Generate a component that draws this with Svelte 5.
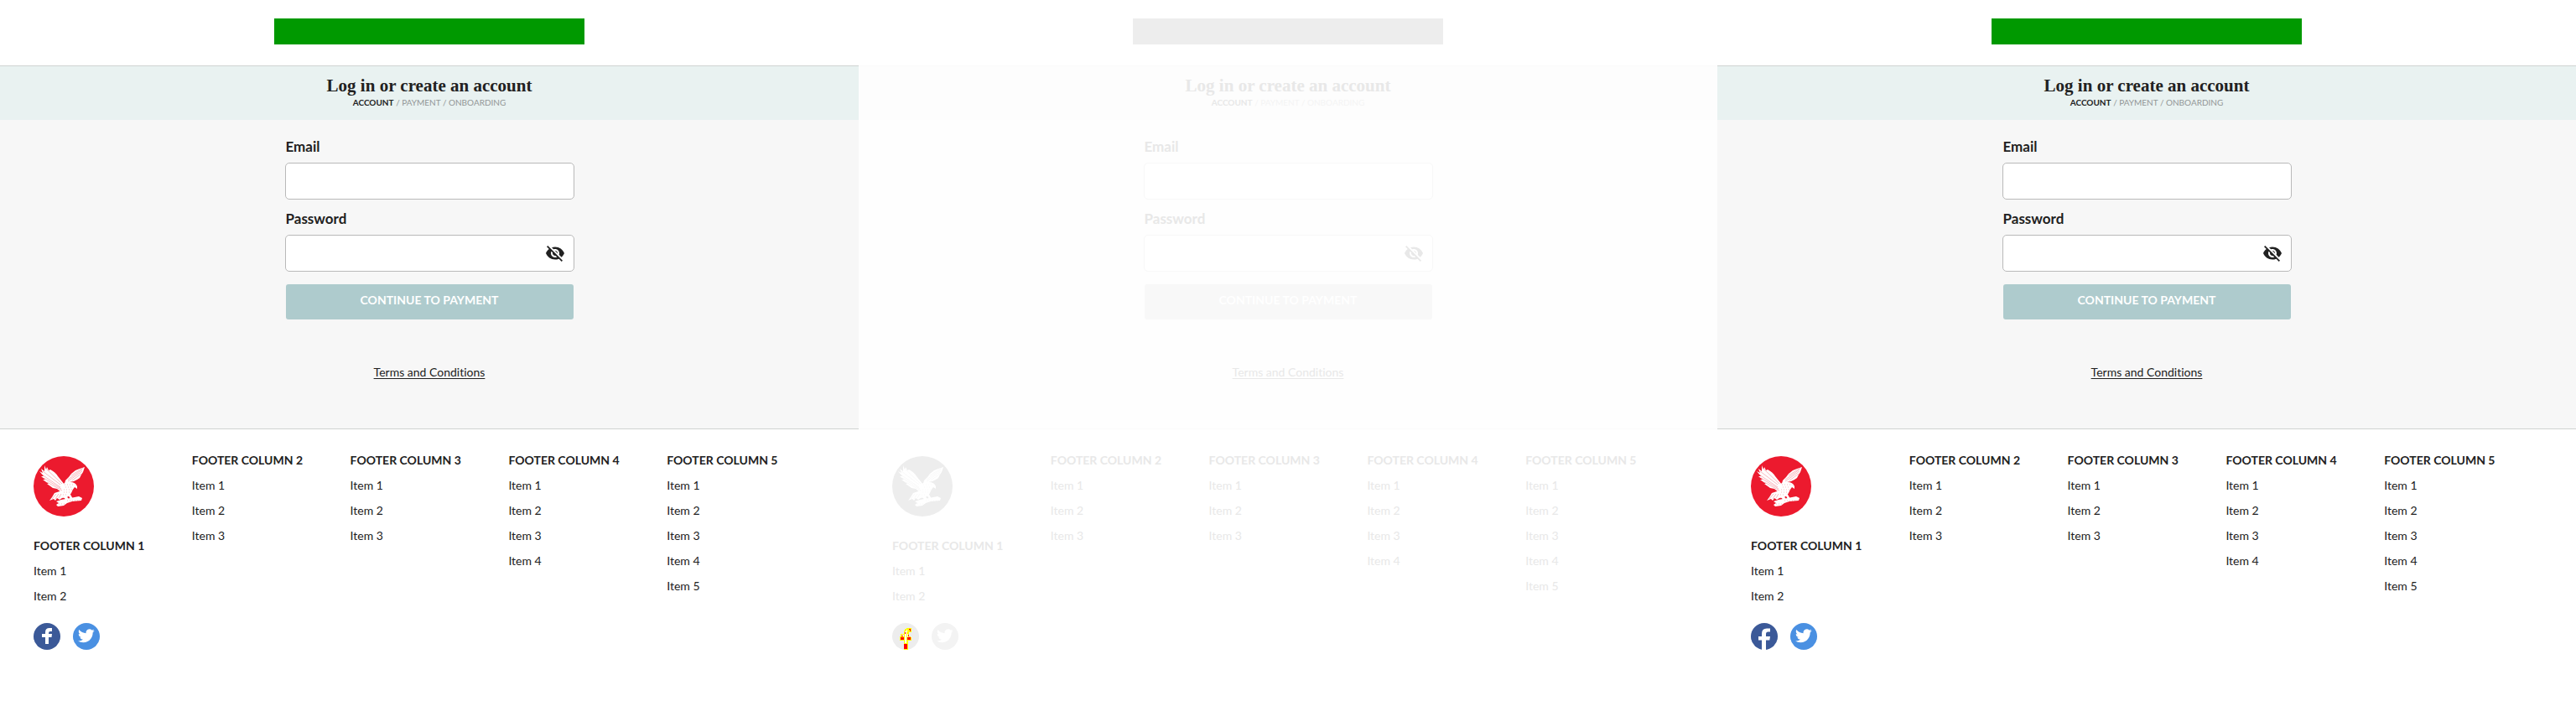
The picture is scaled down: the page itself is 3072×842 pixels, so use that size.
<script>
  const columns = [
    { title: 'Footer column 1', items: 2, brand: true },
    { title: 'Footer column 2', items: 3 },
    { title: 'Footer column 3', items: 3 },
    { title: 'Footer column 4', items: 4 },
    { title: 'Footer column 5', items: 5 }
  ];
  const panels = [
    { id: 'before', tone: '', facebook: 'inset' },
    { id: 'diff', tone: 'faded', facebook: 'marked' },
    { id: 'after', tone: '', facebook: 'full' }
  ];
  const bird = [
    // left wing
    'M13 11 L15 16 L16 13 L18 17 L20 16 Q26 19 29 24 Q33 29 37 34 L36 43 L33 43 L28 39 L23 38 L16 33 L18 33 L11 28 L14 28 L9 24 L12 24 L7 18 L11 20 L9 15 L13 18Z',
    // right wing
    'M61 13 L59 19 L57 22 L55 26 L52 28 L48 30 L43 31 L37 33 L38 29 L42 25 L45 21 L50 17 L55 15Z',
    // body and head
    'M35 34 Q38 30 44 31 Q50 31 52 36 L52 39 L49 37 Q47 39 45 44 Q42 49 37 50 L32 48 L35 43Z',
    // tail
    'M34 41 L25 44 L22 49 L19 53 L24 51 L26 53 L28 50 L31 52 L34 50 L38 49Z',
    // legs
    'M36 48 L39 54 L43 53 L39 47Z M41 46 L44 51 L47 51 L43 44Z',
    // perch
    'M27 54 L33 52 L44 50 L54 48 L58 50 L57 53 L46 54 L40 56 L36 59 L29 60 L27 58 L30 56Z'
  ];
</script>

<div class="board">
  {#each panels as p (p.id)}
    <section class="panel {p.tone}">
      <header class="top"><div class="brand-bar"></div></header>
      <div class="banner">
        <h1>Log in or create an account</h1>
        <p class="steps"><strong>ACCOUNT</strong> / PAYMENT / ONBOARDING</p>
      </div>
      <main>
        <form onsubmit={(e) => e.preventDefault()}>
          <label for="{p.id}-email">Email</label>
          <input id="{p.id}-email" type="email" />
          <label for="{p.id}-password">Password</label>
          <div class="field">
            <input id="{p.id}-password" type="password" />
            <button class="reveal" type="button" aria-label="Show password">
              <svg viewBox="0 0 24 24" width="24" height="24"><path d="M12 7c2.76 0 5 2.24 5 5 0 .65-.13 1.26-.36 1.83l2.92 2.92c1.51-1.26 2.7-2.89 3.43-4.75-1.73-4.39-6-7.5-11-7.5-1.4 0-2.74.25-3.98.7l2.16 2.16C10.74 7.13 11.35 7 12 7zM2 4.27l2.28 2.28.46.46C3.08 8.3 1.78 10.02 1 12c1.73 4.39 6 7.5 11 7.5 1.55 0 3.03-.3 4.38-.84l.42.42L19.73 22 21 20.73 3.27 3 2 4.27zM7.53 9.8l1.55 1.55c-.05.21-.08.43-.08.65 0 1.66 1.34 3 3 3 .22 0 .44-.03.65-.08l1.55 1.55c-.67.33-1.41.53-2.2.53-2.76 0-5-2.24-5-5 0-.79.2-1.53.53-2.2zm4.31-.78l3.15 3.15.02-.16c0-1.66-1.34-3-3-3l-.17.01z" /></svg>
            </button>
          </div>
          <button class="submit" type="submit">CONTINUE TO PAYMENT</button>
        </form>
        <a class="terms" href="#terms">Terms and Conditions</a>
      </main>
      <footer>
        {#each columns as c (c.title)}
          <div class="column">
            {#if c.brand}
              <svg class="eagle" viewBox="0 0 72 72" width="72" height="72">
                <circle class="disc" cx="36" cy="36" r="36" />
                <g class="bird">
                  {#each bird as d}<path {d} />{/each}
                </g>
                <g class="feather">
                  <path d="M11 18 L32 34 M10 22 L32 37 M12 26 L33 39 M16 31 L34 41 M16 16 L34 33 M22 51 L27 45 M26 51 L30 45 M30 50 L33 45" />
                  <path d="M41 28 L58 16 M41 30 L58 18 M45 23 L59 14 M46 29 L57 21" />
                  <path stroke-dasharray="1 2" d="M37 34 H49 M38 37 H47 M36 40 H46 M36 43 H44 M35 46 H41 M30 57 H38 M40 53 H54" />
                </g>
              </svg>
            {/if}
            <h2>{c.title}</h2>
            <ul>
              {#each Array(c.items) as _, i}<li><a href="#item">Item {i + 1}</a></li>{/each}
            </ul>
            {#if c.brand}
              <div class="social">
                <a href="#facebook" aria-label="Facebook">
                  <svg viewBox="0 0 32 32" width="32" height="32">
                    <circle class="fb" cx="16" cy="16" r="16" />
                    {#if p.facebook === 'inset'}
                      <path fill="#fff" d="M14 25V17H10V13H14V11Q14 6 19 6H22V10H20Q18 10 18 12V13H22L21.500 17H18V25Z" />
                    {:else if p.facebook === 'full'}
                      <path fill="#fff" d="M13 32V20.500H9V16H13V12.500Q13 6.500 19 6.500H23V10.500H20.500Q18 10.500 18 13V16H23L22.300 20.500H18V32Z" />
                    {:else}
                      <g shape-rendering="crispEdges">
                        <path fill="#ff0" d="M14 32V21H9V16H10V13H14V9H15V7H17V6H23V11H20V16H22V17H23V21H19V32Z" />
                        <path fill="#fff" d="M15 24V10H17V8H20V7H22V8H18V11H17V24Z M11 14H14V16H11Z M18 13H19V20H18Z" />
                        <path fill="#f00" d="M14 25H18V31H14Z M10 17H14V20H10Z M18 17H22V20H18Z M20 7H22V10H21V8H20Z M11 15H13V16H11Z M19 14H20V16H19Z M15 11H16V13H15Z" />
                      </g>
                    {/if}
                  </svg>
                </a>
                <a href="#twitter" aria-label="Twitter">
                  <svg viewBox="0 0 32 32" width="32" height="32">
                    <circle class="tw" cx="16" cy="16" r="16" />
                    <path fill="#fff" transform="translate(6 5.500) scale(.82)" d="M23.950 4.570a10 10 0 0 1-2.820.770 4.960 4.960 0 0 0 2.160-2.720c-.950.550-2 .950-3.130 1.180a4.920 4.920 0 0 0-8.390 4.480C7.690 8.090 4.070 6.130 1.640 3.160a4.820 4.820 0 0 0-.670 2.480c0 1.710.870 3.210 2.190 4.100a4.900 4.900 0 0 1-2.230-.620v.060a4.920 4.920 0 0 0 3.950 4.830 5 5 0 0 1-2.210.080 4.940 4.940 0 0 0 4.600 3.420A9.870 9.870 0 0 1 0 19.540a13.990 13.990 0 0 0 7.550 2.210c9.050 0 14-7.500 14-13.990 0-.210 0-.420-.020-.630A9.940 9.940 0 0 0 24 4.590z" />
                  </svg>
                </a>
              </div>
            {/if}
          </div>
        {/each}
      </footer>
    </section>
  {/each}
</div>

<style>
  :global(body) { margin: 0; background: #fff; }
  .board {
    display: grid;
    grid-template-columns: repeat(3, minmax(0, 1fr));
    min-height: 100vh;
    font-family: Lato, "Open Sans", sans-serif;
    font-variant-ligatures: none;
  }
  .panel {
    --ink: #212121;
    --soft: #929696;
    --brand: #009900;
    --line: #d0d3d2;
    --band: #e9f2f1;
    --page: #f7f7f7;
    --edge: #b9b9b9;
    --action: #aecbcd;
    --disc: #ec1a2e;
    --fb: #3b5998;
    --tw: #4a90e2;
    color: var(--ink);
    background: #fff;
  }
  .faded {
    --ink: #e8e8e8;
    --soft: #f4f4f4;
    --brand: #ededed;
    --line: #fafafa;
    --band: #fdfdfd;
    --page: #fefefe;
    --edge: #f8f8f8;
    --action: #f8f8f8;
    --disc: #ededed;
    --fb: #ededed;
    --tw: #f3f3f3;
  }
  .top {
    display: flex;
    justify-content: center;
    padding: 22px 0 25px;
    border-bottom: 1px solid var(--line);
  }
  .brand-bar { width: 370px; height: 31px; background: var(--brand); }
  .banner {
    box-sizing: border-box;
    padding: 10px 0 14px;
    background: var(--band);
    text-align: center;
  }
  h1 {
    margin: 0;
    font: bold 21px/26px "Liberation Serif", serif;
  }
  .steps {
    margin: 0;
    font-size: 10px;
    line-height: 14px;
    color: var(--soft);
  }
  .steps strong { color: var(--ink); }
  main {
    display: flex;
    flex-direction: column;
    align-items: center;
    padding: 20px 0 57px;
    background: var(--page);
    border-bottom: 1px solid var(--line);
  }
  form { display: flex; flex-direction: column; width: 345px; }
  label {
    padding-left: 1px;
    margin-bottom: 7px;
    font-size: 17px;
    font-weight: 700;
    line-height: 24px;
  }
  input {
    box-sizing: border-box;
    width: 100%;
    height: 44px;
    margin: 0 0 11px;
    padding: 0 12px;
    border: 1px solid var(--edge);
    border-radius: 5px;
    background: #fff;
    font: inherit;
  }
  .field { position: relative; }
  .reveal {
    position: absolute;
    top: 10px;
    right: 11px;
    width: 24px;
    height: 24px;
    padding: 0;
    border: 0;
    background: none;
  }
  .reveal svg { display: block; fill: var(--ink); }
  .submit {
    height: 42px;
    margin: 4px 1px 0;
    padding: 0 0 4px;
    border: 0;
    border-radius: 3px;
    background: var(--action);
    color: #fff;
    font: bold 14px/20px Lato, "Open Sans", sans-serif;
  }
  .terms {
    margin-top: 53px;
    font-size: 14px;
    line-height: 20px;
    color: var(--ink);
    text-underline-offset: 2px;
  }
  footer {
    display: grid;
    grid-template-columns: repeat(5, 1fr);
    padding: 27px 40px 0;
  }
  .eagle { display: block; margin: 5px 0 25px; }
  .disc { fill: var(--disc); }
  .bird { fill: #fff; }
  .feather { fill: none; stroke: var(--disc); stroke-width: 0.500; opacity: 0.600; }
  h2 {
    margin: 0;
    font-size: 14px;
    line-height: 20px;
    text-transform: uppercase;
  }
  ul { margin: 0; padding: 0; list-style: none; }
  li { margin-top: 10px; font-size: 14px; line-height: 20px; }
  li a { color: var(--ink); text-decoration: none; }
  .social { display: flex; gap: 15px; margin-top: 22px; }
  .social svg { display: block; }
  .fb { fill: var(--fb); }
  .tw { fill: var(--tw); }
</style>
